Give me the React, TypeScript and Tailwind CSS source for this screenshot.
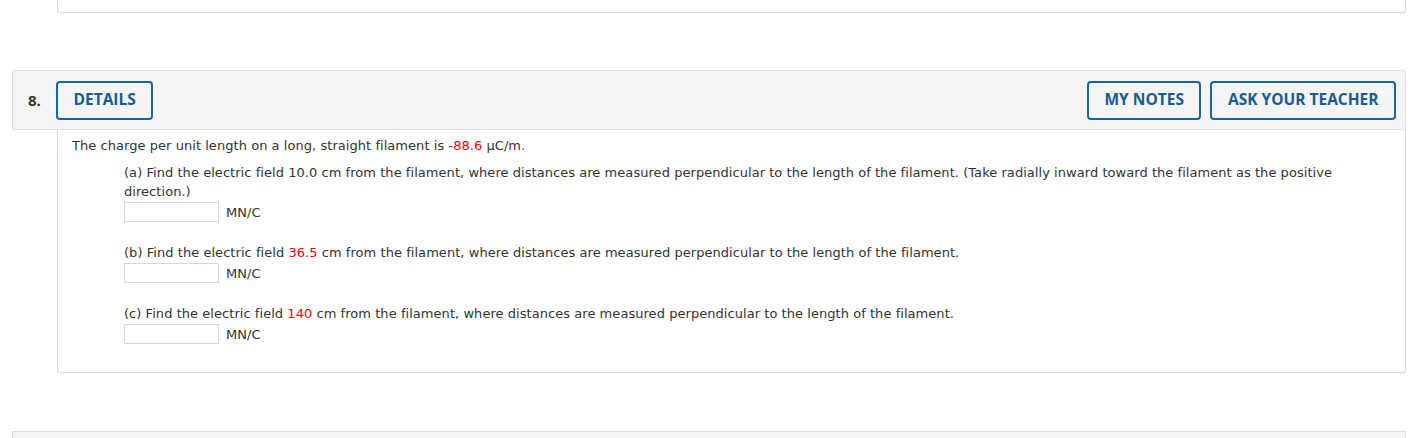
export default function App() {
  const btn =
    'h-[39px] px-[15.5px] rounded-[4px] border-2 border-[#1a64a0] bg-[#f5f5f5] text-[#155b96] text-[15.5px] font-bold'
  const answer = (
    <div className="flex items-center gap-[7px] h-[20px]">
      <div className="w-[95px] h-[20px] border border-[#d6d6d6] bg-white" />
      <span>MN/C</span>
    </div>
  )
  return (
    <div className="w-[1417px] h-[438px] bg-white overflow-hidden pl-[12px] pr-[11px]">
      {/* previous question remnant */}
      <div className="ml-[45px] h-[13px] border-l border-r border-b border-[#d5d5d5] rounded-b-[3px]" />

      {/* header */}
      <div
        className="mt-[57px] h-[60px] bg-[#f5f5f5] border border-[#dedede] rounded-t-[2px] flex items-center pl-[15px] pr-[9px]"
        style={{ fontFamily: '"Open Sans", sans-serif' }}
      >
        <span className="text-[15px] font-bold text-[#333] w-[28px]">8.</span>
        <button className={btn}>DETAILS</button>
        <div className="ml-auto flex gap-[9px]">
          <button className={btn}>MY NOTES</button>
          <button className={btn}>ASK YOUR TEACHER</button>
        </div>
      </div>

      {/* body */}
      <div
        className="ml-[45px] border-l border-r border-b border-[#d5d5d5] rounded-b-[3px] pl-[14px] pr-[15px] pt-[6px] pb-[28px] text-[13px] leading-[19px] text-[#333] tracking-[0.05px]"
        style={{ fontFamily: '"DejaVu Sans", Verdana, sans-serif' }}
      >
        <p>
          The charge per unit length on a long, straight filament is{' '}
          <span className="text-[#f00]">-88.6</span> μC/m.
        </p>
        <div className="pl-[52px] pr-[55px]">
          <p className="mt-[8px]">
            (a) Find the electric field 10.0 cm from the filament, where distances are measured perpendicular to the
            length of the filament. (Take radially inward toward the filament as the positive direction.)
          </p>
          <div className="mt-[1px]">{answer}</div>

          <p className="mt-[21px]">
            (b) Find the electric field <span className="text-[#f00]">36.5</span> cm from the filament, where distances
            are measured perpendicular to the length of the filament.
          </p>
          <div className="mt-[1px]">{answer}</div>

          <p className="mt-[21px]">
            (c) Find the electric field <span className="text-[#f00]">140</span> cm from the filament, where distances
            are measured perpendicular to the length of the filament.
          </p>
          <div className="mt-[1px]">{answer}</div>
        </div>
      </div>

      {/* next question header */}
      <div className="mt-[58px] h-[40px] bg-[#f5f5f5] border border-[#dedede]" />
    </div>
  )
}
